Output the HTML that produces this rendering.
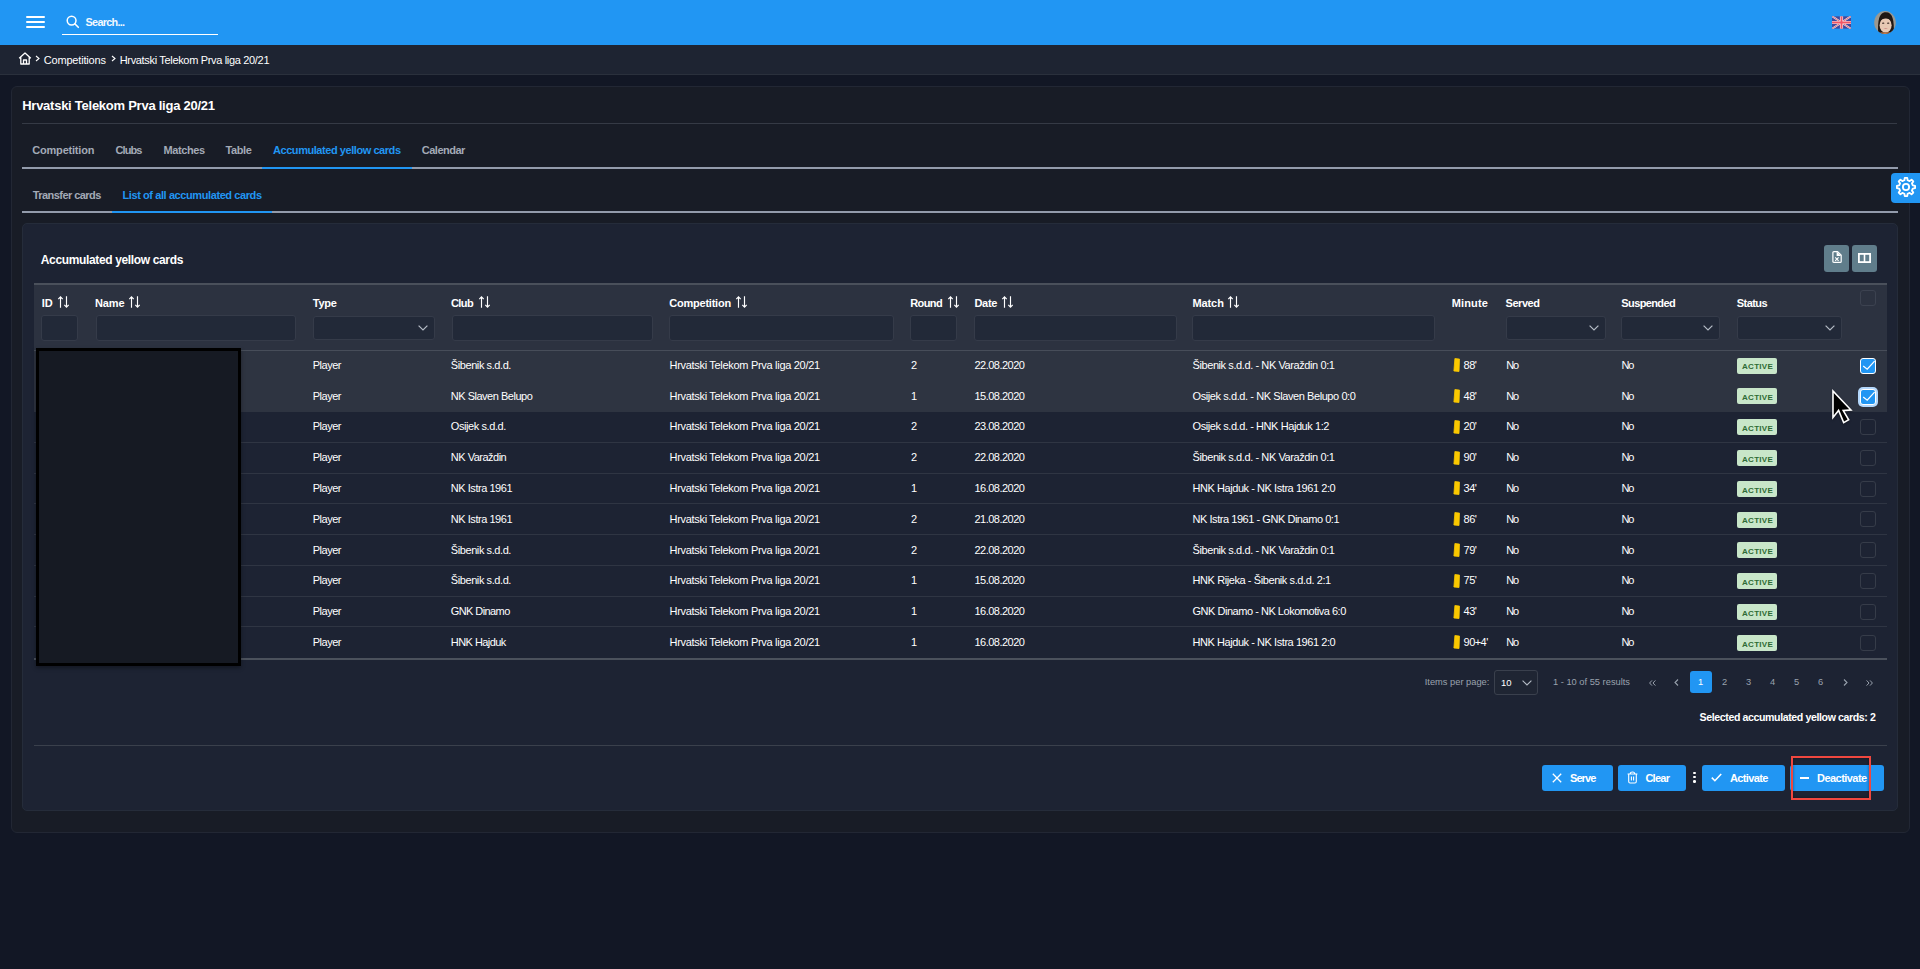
<!DOCTYPE html><html><head><meta charset="utf-8"><style>
*{margin:0;padding:0;box-sizing:border-box}
html,body{width:1920px;height:969px;overflow:hidden;background:#121725;font-family:"Liberation Sans", sans-serif;color:#fff}
.t{position:absolute;white-space:nowrap}
.r{position:absolute}
svg{position:absolute;overflow:visible}
</style></head><body><div class="r" style="left:0px;top:0px;width:1920px;height:45px;background:#2196f3"></div>
<div class="r" style="left:26px;top:16px;width:19px;height:2.2px;background:#fff;border-radius:1px"></div>
<div class="r" style="left:26px;top:21px;width:19px;height:2.2px;background:#fff;border-radius:1px"></div>
<div class="r" style="left:26px;top:26px;width:19px;height:2.2px;background:#fff;border-radius:1px"></div>
<svg style="left:66px;top:15px" width="14" height="14" viewBox="0 0 14 14"><circle cx="5.6" cy="5.6" r="4.4" fill="none" stroke="#fff" stroke-width="1.5"/><line x1="8.8" y1="8.8" x2="12.3" y2="12.3" stroke="#fff" stroke-width="1.6" stroke-linecap="round"/></svg>
<div class="t" style="left:85.60px;top:17.26px;font-size:10.8px;line-height:10.8px;font-weight:700;color:#f2f8fe;letter-spacing:-0.703px;">Search...</div>
<div class="r" style="left:62px;top:34px;width:156px;height:1.3px;background:#fff"></div>
<svg style="left:1832px;top:16px;overflow:hidden" width="19" height="13" viewBox="0 0 60 40">
<defs><clipPath id="fl"><rect width="60" height="40"/></clipPath></defs>
<g clip-path="url(#fl)">
<rect width="60" height="40" fill="#41479b"/>
<path d="M0,0 L60,40 M60,0 L0,40" stroke="#e8e8f0" stroke-width="6"/>
<path d="M0,0 L60,40 M60,0 L0,40" stroke="#ea5a66" stroke-width="2.6"/>
<path d="M30,0 V40 M0,20 H60" stroke="#f0f0f5" stroke-width="10"/>
<path d="M30,0 V40 M0,20 H60" stroke="#f05565" stroke-width="6"/>
</g></svg>
<svg style="left:1874px;top:11px;overflow:hidden" width="22" height="23" viewBox="0 0 22 23">
<defs><clipPath id="av"><ellipse cx="11" cy="11.5" rx="10.8" ry="11.4"/></clipPath></defs>
<g clip-path="url(#av)">
<rect width="22" height="23" fill="#9b9890"/>
<path d="M4.2,23 C3.6,11 4.5,1.2 11.8,1.2 C18.8,1.2 20.2,9 19.8,23 Z" fill="#1f1714"/>
<ellipse cx="11.6" cy="14.2" rx="6.0" ry="7.4" fill="#e8c9b4"/>
<path d="M5.4,10.5 C5.2,4.5 8.6,2.5 11.8,2.5 C15.2,2.5 18.2,4.6 18,10.8 C16.5,8.6 14.2,7.6 11.8,7.6 C9.2,7.6 6.8,8.6 5.4,10.5 Z" fill="#1f1714"/>
<ellipse cx="9.2" cy="12.2" rx="1.2" ry="0.65" fill="#3a2a25"/>
<ellipse cx="14.2" cy="12.2" rx="1.2" ry="0.65" fill="#3a2a25"/>
<path d="M9.2,16.8 Q11.7,19 14.2,16.8 Q11.7,18 9.2,16.8 Z" fill="#b8575a"/>
<rect x="6.5" y="21.4" width="10" height="2" fill="#c9804f"/>
</g></svg>
<div class="r" style="left:0px;top:45px;width:1920px;height:29px;background:#1e2432"></div>
<div class="r" style="left:0px;top:74px;width:1920px;height:1px;background:#2a303c"></div>
<svg style="left:18px;top:52px" width="14" height="13" viewBox="0 0 14 13"><path d="M1.2,6.2 L7,1 L12.8,6.2 M2.8,5 V12 H11.2 V5 M5.5,12 V8 H8.5 V12" fill="none" stroke="#fff" stroke-width="1.3" stroke-linejoin="round"/></svg>
<svg style="left:35px;top:55px" width="5" height="7" viewBox="0 0 5 7"><path d="M1,1 L4,3.5 L1,6" fill="none" stroke="#fff" stroke-width="1.1"/></svg>
<div class="t" style="left:43.70px;top:54.69px;font-size:11px;line-height:11px;letter-spacing:-0.172px;">Competitions</div>
<svg style="left:111px;top:55px" width="5" height="7" viewBox="0 0 5 7"><path d="M1,1 L4,3.5 L1,6" fill="none" stroke="#fff" stroke-width="1.1"/></svg>
<div class="t" style="left:119.70px;top:54.69px;font-size:11px;line-height:11px;letter-spacing:-0.328px;">Hrvatski Telekom Prva liga 20/21</div>
<div class="r" style="left:11px;top:86px;width:1899px;height:747px;background:#181c26;border:1px solid #222734;border-radius:6px"></div>
<div class="t" style="left:22.20px;top:99.00px;font-size:13px;line-height:13px;font-weight:700;letter-spacing:-0.253px;">Hrvatski Telekom Prva liga 20/21</div>
<div class="r" style="left:22px;top:123px;width:1875px;height:1px;background:#353a45"></div>
<div class="t" style="left:32.30px;top:145.19px;font-size:11px;line-height:11px;font-weight:700;color:#a3aab6;letter-spacing:-0.206px;">Competition</div>
<div class="t" style="left:115.50px;top:145.19px;font-size:11px;line-height:11px;font-weight:700;color:#a3aab6;letter-spacing:-0.914px;">Clubs</div>
<div class="t" style="left:163.50px;top:145.19px;font-size:11px;line-height:11px;font-weight:700;color:#a3aab6;letter-spacing:-0.419px;">Matches</div>
<div class="t" style="left:225.60px;top:145.19px;font-size:11px;line-height:11px;font-weight:700;color:#a3aab6;letter-spacing:-0.403px;">Table</div>
<div class="t" style="left:273.00px;top:145.19px;font-size:11px;line-height:11px;font-weight:700;color:#2196f3;letter-spacing:-0.442px;">Accumulated yellow cards</div>
<div class="t" style="left:421.80px;top:145.19px;font-size:11px;line-height:11px;font-weight:700;color:#a3aab6;letter-spacing:-0.51px;">Calendar</div>
<div class="r" style="left:22px;top:167px;width:1876px;height:2px;background:#939bab"></div>
<div class="r" style="left:262px;top:167px;width:150px;height:2px;background:#2196f3"></div>
<div class="t" style="left:32.70px;top:189.69px;font-size:11px;line-height:11px;font-weight:700;color:#a3aab6;letter-spacing:-0.548px;">Transfer cards</div>
<div class="t" style="left:122.50px;top:189.69px;font-size:11px;line-height:11px;font-weight:700;color:#2196f3;letter-spacing:-0.41px;">List of all accumulated cards</div>
<div class="r" style="left:22px;top:211px;width:1876px;height:2px;background:#939bab"></div>
<div class="r" style="left:112px;top:211px;width:160px;height:2px;background:#2196f3"></div>
<div class="r" style="left:1891px;top:173px;width:29px;height:30px;background:#2196f3;border-radius:4px 0 0 4px"></div>
<svg style="left:1895px;top:176.2px" width="22" height="22" viewBox="0 0 24 24"><path fill="none" stroke="#fff" stroke-width="2" stroke-linejoin="round" d="M19.39,10.23 L21.91,10.67 L21.91,13.33 L19.39,13.77 L18.48,15.97 L19.95,18.07 L18.07,19.95 L15.97,18.48 L13.77,19.39 L13.33,21.91 L10.67,21.91 L10.23,19.39 L8.03,18.48 L5.93,19.95 L4.05,18.07 L5.52,15.97 L4.61,13.77 L2.09,13.33 L2.09,10.67 L4.61,10.23 L5.52,8.03 L4.05,5.93 L5.93,4.05 L8.03,5.52 L10.23,4.61 L10.67,2.09 L13.33,2.09 L13.77,4.61 L15.97,5.52 L18.07,4.05 L19.95,5.93 L18.48,8.03 Z"/><circle cx="12" cy="12" r="3.4" fill="none" stroke="#fff" stroke-width="2"/></svg>
<div class="r" style="left:22px;top:223px;width:1876px;height:588px;background:#1d2333;border:1px solid #252c3a;border-radius:5px"></div>
<div class="t" style="left:40.80px;top:253.84px;font-size:12px;line-height:12px;font-weight:700;letter-spacing:-0.357px;">Accumulated yellow cards</div>
<div class="r" style="left:1824px;top:245px;width:25px;height:27px;background:#607d8b;border-radius:3px"></div>
<div class="r" style="left:1852px;top:245px;width:25px;height:27px;background:#607d8b;border-radius:3px"></div>
<svg style="left:1832px;top:251px" width="10" height="12" viewBox="0 0 10 12"><path d="M0.9,1.6 Q0.9,0.6 1.9,0.6 H5.6 L9.2,4.2 V10.4 Q9.2,11.4 8.2,11.4 H1.9 Q0.9,11.4 0.9,10.4 Z" fill="none" stroke="#fff" stroke-width="1.2" stroke-linejoin="round"/><path d="M4.6,0.6 V5 H9.2 Z" fill="#fff"/><path d="M3.2,6.3 L6.6,9.9 M6.6,6.3 L3.2,9.9" stroke="#fff" stroke-width="1.1"/></svg>
<svg style="left:1858px;top:253px" width="13" height="10" viewBox="0 0 13 10"><rect x="0.9" y="0.9" width="11.2" height="8.2" fill="none" stroke="#fff" stroke-width="1.8"/><line x1="6.5" y1="1" x2="6.5" y2="9" stroke="#fff" stroke-width="1.6"/></svg>
<div class="r" style="left:34px;top:283px;width:1853px;height:2px;background:#4a505b"></div>
<div class="r" style="left:34px;top:285px;width:1853px;height:65.5px;background:#2c3240"></div>
<div class="r" style="left:34px;top:350px;width:1853px;height:1px;background:#474d59"></div>
<div class="t" style="left:41.70px;top:297.69px;font-size:11px;line-height:11px;font-weight:700;">ID</div>
<svg style="left:58px;top:296px" width="12" height="12" viewBox="0 0 12 12"><path d="M2.5,11.8 V0.8 M0.3,3.2 L2.5,0.8 L4.7,3.2 M8.5,0.2 V11.2 M6.3,8.8 L8.5,11.2 L10.7,8.8" fill="none" stroke="#fff" stroke-width="1.15"/></svg>
<div class="t" style="left:95.10px;top:297.69px;font-size:11px;line-height:11px;font-weight:700;letter-spacing:-0.187px;">Name</div>
<svg style="left:129px;top:296px" width="12" height="12" viewBox="0 0 12 12"><path d="M2.5,11.8 V0.8 M0.3,3.2 L2.5,0.8 L4.7,3.2 M8.5,0.2 V11.2 M6.3,8.8 L8.5,11.2 L10.7,8.8" fill="none" stroke="#fff" stroke-width="1.15"/></svg>
<div class="t" style="left:312.80px;top:297.69px;font-size:11px;line-height:11px;font-weight:700;letter-spacing:-0.253px;">Type</div>
<div class="t" style="left:451.00px;top:297.69px;font-size:11px;line-height:11px;font-weight:700;letter-spacing:-0.613px;">Club</div>
<svg style="left:479px;top:296px" width="12" height="12" viewBox="0 0 12 12"><path d="M2.5,11.8 V0.8 M0.3,3.2 L2.5,0.8 L4.7,3.2 M8.5,0.2 V11.2 M6.3,8.8 L8.5,11.2 L10.7,8.8" fill="none" stroke="#fff" stroke-width="1.15"/></svg>
<div class="t" style="left:669.30px;top:297.69px;font-size:11px;line-height:11px;font-weight:700;letter-spacing:-0.236px;">Competition</div>
<svg style="left:736px;top:296px" width="12" height="12" viewBox="0 0 12 12"><path d="M2.5,11.8 V0.8 M0.3,3.2 L2.5,0.8 L4.7,3.2 M8.5,0.2 V11.2 M6.3,8.8 L8.5,11.2 L10.7,8.8" fill="none" stroke="#fff" stroke-width="1.15"/></svg>
<div class="t" style="left:910.30px;top:297.69px;font-size:11px;line-height:11px;font-weight:700;letter-spacing:-0.63px;">Round</div>
<svg style="left:948px;top:296px" width="12" height="12" viewBox="0 0 12 12"><path d="M2.5,11.8 V0.8 M0.3,3.2 L2.5,0.8 L4.7,3.2 M8.5,0.2 V11.2 M6.3,8.8 L8.5,11.2 L10.7,8.8" fill="none" stroke="#fff" stroke-width="1.15"/></svg>
<div class="t" style="left:974.40px;top:297.69px;font-size:11px;line-height:11px;font-weight:700;letter-spacing:-0.247px;">Date</div>
<svg style="left:1002px;top:296px" width="12" height="12" viewBox="0 0 12 12"><path d="M2.5,11.8 V0.8 M0.3,3.2 L2.5,0.8 L4.7,3.2 M8.5,0.2 V11.2 M6.3,8.8 L8.5,11.2 L10.7,8.8" fill="none" stroke="#fff" stroke-width="1.15"/></svg>
<div class="t" style="left:1192.40px;top:297.69px;font-size:11px;line-height:11px;font-weight:700;letter-spacing:-0.07px;">Match</div>
<svg style="left:1228px;top:296px" width="12" height="12" viewBox="0 0 12 12"><path d="M2.5,11.8 V0.8 M0.3,3.2 L2.5,0.8 L4.7,3.2 M8.5,0.2 V11.2 M6.3,8.8 L8.5,11.2 L10.7,8.8" fill="none" stroke="#fff" stroke-width="1.15"/></svg>
<div class="t" style="left:1451.80px;top:297.69px;font-size:11px;line-height:11px;font-weight:700;letter-spacing:0.112px;">Minute</div>
<div class="t" style="left:1505.50px;top:297.69px;font-size:11px;line-height:11px;font-weight:700;letter-spacing:-0.438px;">Served</div>
<div class="t" style="left:1621.30px;top:297.69px;font-size:11px;line-height:11px;font-weight:700;letter-spacing:-0.611px;">Suspended</div>
<div class="t" style="left:1736.80px;top:297.69px;font-size:11px;line-height:11px;font-weight:700;letter-spacing:-0.584px;">Status</div>
<div class="r" style="left:41.4px;top:315px;width:37.1px;height:26px;background:#222938;border:1px solid #353b49;border-radius:3px"></div>
<div class="r" style="left:95.6px;top:315px;width:200.79999999999998px;height:26px;background:#222938;border:1px solid #353b49;border-radius:3px"></div>
<div class="r" style="left:313.2px;top:315.5px;width:121.5px;height:24.0px;background:#222938;border:1px solid #353b49;border-radius:3px"></div>
<svg style="left:417.7px;top:324.8px" width="10" height="6" viewBox="0 0 10 6"><path d="M0.6,0.6 L5,5 L9.4,0.6" fill="none" stroke="#b5bcc6" stroke-width="1.2"/></svg>
<div class="r" style="left:451.5px;top:315px;width:201.10000000000002px;height:26px;background:#222938;border:1px solid #353b49;border-radius:3px"></div>
<div class="r" style="left:669.3px;top:315px;width:224.9000000000001px;height:26px;background:#222938;border:1px solid #353b49;border-radius:3px"></div>
<div class="r" style="left:910.3px;top:315px;width:47.200000000000045px;height:26px;background:#222938;border:1px solid #353b49;border-radius:3px"></div>
<div class="r" style="left:974.4px;top:315px;width:202.19999999999993px;height:26px;background:#222938;border:1px solid #353b49;border-radius:3px"></div>
<div class="r" style="left:1192.4px;top:315px;width:242.89999999999986px;height:26px;background:#222938;border:1px solid #353b49;border-radius:3px"></div>
<div class="r" style="left:1505.5px;top:315.5px;width:100.09999999999991px;height:24.0px;background:#222938;border:1px solid #353b49;border-radius:3px"></div>
<svg style="left:1588.6px;top:324.8px" width="10" height="6" viewBox="0 0 10 6"><path d="M0.6,0.6 L5,5 L9.4,0.6" fill="none" stroke="#b5bcc6" stroke-width="1.2"/></svg>
<div class="r" style="left:1621.3px;top:315.5px;width:99.0px;height:24.0px;background:#222938;border:1px solid #353b49;border-radius:3px"></div>
<svg style="left:1703.3px;top:324.8px" width="10" height="6" viewBox="0 0 10 6"><path d="M0.6,0.6 L5,5 L9.4,0.6" fill="none" stroke="#b5bcc6" stroke-width="1.2"/></svg>
<div class="r" style="left:1736.8px;top:315.5px;width:105.0px;height:24.0px;background:#222938;border:1px solid #353b49;border-radius:3px"></div>
<svg style="left:1824.8px;top:324.8px" width="10" height="6" viewBox="0 0 10 6"><path d="M0.6,0.6 L5,5 L9.4,0.6" fill="none" stroke="#b5bcc6" stroke-width="1.2"/></svg>
<div class="r" style="left:1860px;top:290px;width:16px;height:16px;border:1px solid #3c4250;border-radius:3px"></div>
<div class="r" style="left:34px;top:351px;width:1853px;height:61px;background:#2e3441"></div>
<div class="t" style="left:312.80px;top:359.89px;font-size:11px;line-height:11px;letter-spacing:-0.51px;">Player</div>
<div class="t" style="left:450.80px;top:359.89px;font-size:11px;line-height:11px;letter-spacing:-0.416px;">Šibenik s.d.d.</div>
<div class="t" style="left:669.50px;top:359.89px;font-size:11px;line-height:11px;letter-spacing:-0.303px;">Hrvatski Telekom Prva liga 20/21</div>
<div class="t" style="left:911.00px;top:359.89px;font-size:11px;line-height:11px;letter-spacing:-0.501px;">2</div>
<div class="t" style="left:974.40px;top:359.89px;font-size:11px;line-height:11px;letter-spacing:-0.5px;">22.08.2020</div>
<div class="t" style="left:1192.50px;top:359.89px;font-size:11px;line-height:11px;letter-spacing:-0.409px;">Šibenik s.d.d. - NK Varaždin 0:1</div>
<svg style="left:1453px;top:358.20px" width="8" height="14" viewBox="0 0 8 14"><path d="M1.9,0.5 L6.5,1.1 L6.0,13.5 L0.9,13.0 Z" fill="#fac800" stroke="#fac800" stroke-width="0.8" stroke-linejoin="round"/></svg>
<div class="t" style="left:1463.60px;top:359.89px;font-size:11px;line-height:11px;letter-spacing:-0.586px;">88'</div>
<div class="t" style="left:1506.30px;top:359.89px;font-size:11px;line-height:11px;letter-spacing:-1.15px;">No</div>
<div class="t" style="left:1621.50px;top:359.89px;font-size:11px;line-height:11px;letter-spacing:-1.15px;">No</div>
<div class="r" style="left:1737px;top:357.6px;width:40px;height:16px;background:#c8e6c9;border-radius:2px"></div>
<div class="t" style="left:1742.00px;top:363.43px;font-size:8.0px;line-height:8.0px;font-weight:700;color:#2e6b34;letter-spacing:0.3px;">ACTIVE</div>
<div class="r" style="left:1860px;top:358px;width:16px;height:16px;background:#2196f3;border:1px solid #fff;border-radius:3px"></div>
<svg style="left:1860px;top:358px" width="16" height="16" viewBox="0 0 16 16"><path d="M3.2,8 L7.2,11.2 L14.6,3.2" fill="none" stroke="#fff" stroke-width="1.25"/></svg>
<div class="t" style="left:312.80px;top:390.69px;font-size:11px;line-height:11px;letter-spacing:-0.51px;">Player</div>
<div class="t" style="left:450.80px;top:390.69px;font-size:11px;line-height:11px;letter-spacing:-0.487px;">NK Slaven Belupo</div>
<div class="t" style="left:669.50px;top:390.69px;font-size:11px;line-height:11px;letter-spacing:-0.303px;">Hrvatski Telekom Prva liga 20/21</div>
<div class="t" style="left:911.00px;top:390.69px;font-size:11px;line-height:11px;letter-spacing:-0.501px;">1</div>
<div class="t" style="left:974.40px;top:390.69px;font-size:11px;line-height:11px;letter-spacing:-0.5px;">15.08.2020</div>
<div class="t" style="left:1192.50px;top:390.69px;font-size:11px;line-height:11px;letter-spacing:-0.416px;">Osijek s.d.d. - NK Slaven Belupo 0:0</div>
<svg style="left:1453px;top:389.00px" width="8" height="14" viewBox="0 0 8 14"><path d="M1.9,0.5 L6.5,1.1 L6.0,13.5 L0.9,13.0 Z" fill="#fac800" stroke="#fac800" stroke-width="0.8" stroke-linejoin="round"/></svg>
<div class="t" style="left:1463.60px;top:390.69px;font-size:11px;line-height:11px;letter-spacing:-0.586px;">48'</div>
<div class="t" style="left:1506.30px;top:390.69px;font-size:11px;line-height:11px;letter-spacing:-1.15px;">No</div>
<div class="t" style="left:1621.50px;top:390.69px;font-size:11px;line-height:11px;letter-spacing:-1.15px;">No</div>
<div class="r" style="left:1737px;top:388.40000000000003px;width:40px;height:16px;background:#c8e6c9;border-radius:2px"></div>
<div class="t" style="left:1742.00px;top:394.23px;font-size:8.0px;line-height:8.0px;font-weight:700;color:#2e6b34;letter-spacing:0.3px;">ACTIVE</div>
<div class="r" style="left:1858px;top:387px;width:20px;height:20px;background:#b3d7fb;border-radius:5px"></div>
<div class="r" style="left:1860px;top:389px;width:16px;height:16px;background:#2196f3;border:1px solid #fff;border-radius:3px"></div>
<svg style="left:1860px;top:389px" width="16" height="16" viewBox="0 0 16 16"><path d="M3.2,8 L7.2,11.2 L14.6,3.2" fill="none" stroke="#fff" stroke-width="1.25"/></svg>
<div class="r" style="left:34px;top:442px;width:1853px;height:1px;background:#2f3543"></div>
<div class="t" style="left:312.80px;top:421.49px;font-size:11px;line-height:11px;letter-spacing:-0.51px;">Player</div>
<div class="t" style="left:450.80px;top:421.49px;font-size:11px;line-height:11px;letter-spacing:-0.413px;">Osijek s.d.d.</div>
<div class="t" style="left:669.50px;top:421.49px;font-size:11px;line-height:11px;letter-spacing:-0.303px;">Hrvatski Telekom Prva liga 20/21</div>
<div class="t" style="left:911.00px;top:421.49px;font-size:11px;line-height:11px;letter-spacing:-0.501px;">2</div>
<div class="t" style="left:974.40px;top:421.49px;font-size:11px;line-height:11px;letter-spacing:-0.5px;">23.08.2020</div>
<div class="t" style="left:1192.50px;top:421.49px;font-size:11px;line-height:11px;letter-spacing:-0.421px;">Osijek s.d.d. - HNK Hajduk 1:2</div>
<svg style="left:1453px;top:419.80px" width="8" height="14" viewBox="0 0 8 14"><path d="M1.9,0.5 L6.5,1.1 L6.0,13.5 L0.9,13.0 Z" fill="#fac800" stroke="#fac800" stroke-width="0.8" stroke-linejoin="round"/></svg>
<div class="t" style="left:1463.60px;top:421.49px;font-size:11px;line-height:11px;letter-spacing:-0.586px;">20'</div>
<div class="t" style="left:1506.30px;top:421.49px;font-size:11px;line-height:11px;letter-spacing:-1.15px;">No</div>
<div class="t" style="left:1621.50px;top:421.49px;font-size:11px;line-height:11px;letter-spacing:-1.15px;">No</div>
<div class="r" style="left:1737px;top:419.20000000000005px;width:40px;height:16px;background:#c8e6c9;border-radius:2px"></div>
<div class="t" style="left:1742.00px;top:425.03px;font-size:8.0px;line-height:8.0px;font-weight:700;color:#2e6b34;letter-spacing:0.3px;">ACTIVE</div>
<div class="r" style="left:1860px;top:419px;width:16px;height:16px;border:1px solid #363c49;border-radius:3px"></div>
<div class="r" style="left:34px;top:473px;width:1853px;height:1px;background:#2f3543"></div>
<div class="t" style="left:312.80px;top:452.29px;font-size:11px;line-height:11px;letter-spacing:-0.51px;">Player</div>
<div class="t" style="left:450.80px;top:452.29px;font-size:11px;line-height:11px;letter-spacing:-0.499px;">NK Varaždin</div>
<div class="t" style="left:669.50px;top:452.29px;font-size:11px;line-height:11px;letter-spacing:-0.303px;">Hrvatski Telekom Prva liga 20/21</div>
<div class="t" style="left:911.00px;top:452.29px;font-size:11px;line-height:11px;letter-spacing:-0.501px;">2</div>
<div class="t" style="left:974.40px;top:452.29px;font-size:11px;line-height:11px;letter-spacing:-0.5px;">22.08.2020</div>
<div class="t" style="left:1192.50px;top:452.29px;font-size:11px;line-height:11px;letter-spacing:-0.409px;">Šibenik s.d.d. - NK Varaždin 0:1</div>
<svg style="left:1453px;top:450.60px" width="8" height="14" viewBox="0 0 8 14"><path d="M1.9,0.5 L6.5,1.1 L6.0,13.5 L0.9,13.0 Z" fill="#fac800" stroke="#fac800" stroke-width="0.8" stroke-linejoin="round"/></svg>
<div class="t" style="left:1463.60px;top:452.29px;font-size:11px;line-height:11px;letter-spacing:-0.586px;">90'</div>
<div class="t" style="left:1506.30px;top:452.29px;font-size:11px;line-height:11px;letter-spacing:-1.15px;">No</div>
<div class="t" style="left:1621.50px;top:452.29px;font-size:11px;line-height:11px;letter-spacing:-1.15px;">No</div>
<div class="r" style="left:1737px;top:450.0px;width:40px;height:16px;background:#c8e6c9;border-radius:2px"></div>
<div class="t" style="left:1742.00px;top:455.83px;font-size:8.0px;line-height:8.0px;font-weight:700;color:#2e6b34;letter-spacing:0.3px;">ACTIVE</div>
<div class="r" style="left:1860px;top:450px;width:16px;height:16px;border:1px solid #363c49;border-radius:3px"></div>
<div class="r" style="left:34px;top:503px;width:1853px;height:1px;background:#2f3543"></div>
<div class="t" style="left:312.80px;top:483.09px;font-size:11px;line-height:11px;letter-spacing:-0.51px;">Player</div>
<div class="t" style="left:450.80px;top:483.09px;font-size:11px;line-height:11px;letter-spacing:-0.459px;">NK Istra 1961</div>
<div class="t" style="left:669.50px;top:483.09px;font-size:11px;line-height:11px;letter-spacing:-0.303px;">Hrvatski Telekom Prva liga 20/21</div>
<div class="t" style="left:911.00px;top:483.09px;font-size:11px;line-height:11px;letter-spacing:-0.501px;">1</div>
<div class="t" style="left:974.40px;top:483.09px;font-size:11px;line-height:11px;letter-spacing:-0.5px;">16.08.2020</div>
<div class="t" style="left:1192.50px;top:483.09px;font-size:11px;line-height:11px;letter-spacing:-0.44px;">HNK Hajduk - NK Istra 1961 2:0</div>
<svg style="left:1453px;top:481.40px" width="8" height="14" viewBox="0 0 8 14"><path d="M1.9,0.5 L6.5,1.1 L6.0,13.5 L0.9,13.0 Z" fill="#fac800" stroke="#fac800" stroke-width="0.8" stroke-linejoin="round"/></svg>
<div class="t" style="left:1463.60px;top:483.09px;font-size:11px;line-height:11px;letter-spacing:-0.586px;">34'</div>
<div class="t" style="left:1506.30px;top:483.09px;font-size:11px;line-height:11px;letter-spacing:-1.15px;">No</div>
<div class="t" style="left:1621.50px;top:483.09px;font-size:11px;line-height:11px;letter-spacing:-1.15px;">No</div>
<div class="r" style="left:1737px;top:480.8px;width:40px;height:16px;background:#c8e6c9;border-radius:2px"></div>
<div class="t" style="left:1742.00px;top:486.63px;font-size:8.0px;line-height:8.0px;font-weight:700;color:#2e6b34;letter-spacing:0.3px;">ACTIVE</div>
<div class="r" style="left:1860px;top:481px;width:16px;height:16px;border:1px solid #363c49;border-radius:3px"></div>
<div class="r" style="left:34px;top:534px;width:1853px;height:1px;background:#2f3543"></div>
<div class="t" style="left:312.80px;top:513.89px;font-size:11px;line-height:11px;letter-spacing:-0.51px;">Player</div>
<div class="t" style="left:450.80px;top:513.89px;font-size:11px;line-height:11px;letter-spacing:-0.459px;">NK Istra 1961</div>
<div class="t" style="left:669.50px;top:513.89px;font-size:11px;line-height:11px;letter-spacing:-0.303px;">Hrvatski Telekom Prva liga 20/21</div>
<div class="t" style="left:911.00px;top:513.89px;font-size:11px;line-height:11px;letter-spacing:-0.501px;">2</div>
<div class="t" style="left:974.40px;top:513.89px;font-size:11px;line-height:11px;letter-spacing:-0.5px;">21.08.2020</div>
<div class="t" style="left:1192.50px;top:513.89px;font-size:11px;line-height:11px;letter-spacing:-0.452px;">NK Istra 1961 - GNK Dinamo 0:1</div>
<svg style="left:1453px;top:512.20px" width="8" height="14" viewBox="0 0 8 14"><path d="M1.9,0.5 L6.5,1.1 L6.0,13.5 L0.9,13.0 Z" fill="#fac800" stroke="#fac800" stroke-width="0.8" stroke-linejoin="round"/></svg>
<div class="t" style="left:1463.60px;top:513.89px;font-size:11px;line-height:11px;letter-spacing:-0.586px;">86'</div>
<div class="t" style="left:1506.30px;top:513.89px;font-size:11px;line-height:11px;letter-spacing:-1.15px;">No</div>
<div class="t" style="left:1621.50px;top:513.89px;font-size:11px;line-height:11px;letter-spacing:-1.15px;">No</div>
<div class="r" style="left:1737px;top:511.6px;width:40px;height:16px;background:#c8e6c9;border-radius:2px"></div>
<div class="t" style="left:1742.00px;top:517.43px;font-size:8.0px;line-height:8.0px;font-weight:700;color:#2e6b34;letter-spacing:0.3px;">ACTIVE</div>
<div class="r" style="left:1860px;top:511px;width:16px;height:16px;border:1px solid #363c49;border-radius:3px"></div>
<div class="r" style="left:34px;top:565px;width:1853px;height:1px;background:#2f3543"></div>
<div class="t" style="left:312.80px;top:544.69px;font-size:11px;line-height:11px;letter-spacing:-0.51px;">Player</div>
<div class="t" style="left:450.80px;top:544.69px;font-size:11px;line-height:11px;letter-spacing:-0.416px;">Šibenik s.d.d.</div>
<div class="t" style="left:669.50px;top:544.69px;font-size:11px;line-height:11px;letter-spacing:-0.303px;">Hrvatski Telekom Prva liga 20/21</div>
<div class="t" style="left:911.00px;top:544.69px;font-size:11px;line-height:11px;letter-spacing:-0.501px;">2</div>
<div class="t" style="left:974.40px;top:544.69px;font-size:11px;line-height:11px;letter-spacing:-0.5px;">22.08.2020</div>
<div class="t" style="left:1192.50px;top:544.69px;font-size:11px;line-height:11px;letter-spacing:-0.409px;">Šibenik s.d.d. - NK Varaždin 0:1</div>
<svg style="left:1453px;top:543.00px" width="8" height="14" viewBox="0 0 8 14"><path d="M1.9,0.5 L6.5,1.1 L6.0,13.5 L0.9,13.0 Z" fill="#fac800" stroke="#fac800" stroke-width="0.8" stroke-linejoin="round"/></svg>
<div class="t" style="left:1463.60px;top:544.69px;font-size:11px;line-height:11px;letter-spacing:-0.586px;">79'</div>
<div class="t" style="left:1506.30px;top:544.69px;font-size:11px;line-height:11px;letter-spacing:-1.15px;">No</div>
<div class="t" style="left:1621.50px;top:544.69px;font-size:11px;line-height:11px;letter-spacing:-1.15px;">No</div>
<div class="r" style="left:1737px;top:542.4000000000001px;width:40px;height:16px;background:#c8e6c9;border-radius:2px"></div>
<div class="t" style="left:1742.00px;top:548.23px;font-size:8.0px;line-height:8.0px;font-weight:700;color:#2e6b34;letter-spacing:0.3px;">ACTIVE</div>
<div class="r" style="left:1860px;top:542px;width:16px;height:16px;border:1px solid #363c49;border-radius:3px"></div>
<div class="r" style="left:34px;top:596px;width:1853px;height:1px;background:#2f3543"></div>
<div class="t" style="left:312.80px;top:575.49px;font-size:11px;line-height:11px;letter-spacing:-0.51px;">Player</div>
<div class="t" style="left:450.80px;top:575.49px;font-size:11px;line-height:11px;letter-spacing:-0.416px;">Šibenik s.d.d.</div>
<div class="t" style="left:669.50px;top:575.49px;font-size:11px;line-height:11px;letter-spacing:-0.303px;">Hrvatski Telekom Prva liga 20/21</div>
<div class="t" style="left:911.00px;top:575.49px;font-size:11px;line-height:11px;letter-spacing:-0.501px;">1</div>
<div class="t" style="left:974.40px;top:575.49px;font-size:11px;line-height:11px;letter-spacing:-0.5px;">15.08.2020</div>
<div class="t" style="left:1192.50px;top:575.49px;font-size:11px;line-height:11px;letter-spacing:-0.412px;">HNK Rijeka - Šibenik s.d.d. 2:1</div>
<svg style="left:1453px;top:573.80px" width="8" height="14" viewBox="0 0 8 14"><path d="M1.9,0.5 L6.5,1.1 L6.0,13.5 L0.9,13.0 Z" fill="#fac800" stroke="#fac800" stroke-width="0.8" stroke-linejoin="round"/></svg>
<div class="t" style="left:1463.60px;top:575.49px;font-size:11px;line-height:11px;letter-spacing:-0.586px;">75'</div>
<div class="t" style="left:1506.30px;top:575.49px;font-size:11px;line-height:11px;letter-spacing:-1.15px;">No</div>
<div class="t" style="left:1621.50px;top:575.49px;font-size:11px;line-height:11px;letter-spacing:-1.15px;">No</div>
<div class="r" style="left:1737px;top:573.2px;width:40px;height:16px;background:#c8e6c9;border-radius:2px"></div>
<div class="t" style="left:1742.00px;top:579.03px;font-size:8.0px;line-height:8.0px;font-weight:700;color:#2e6b34;letter-spacing:0.3px;">ACTIVE</div>
<div class="r" style="left:1860px;top:573px;width:16px;height:16px;border:1px solid #363c49;border-radius:3px"></div>
<div class="r" style="left:34px;top:626px;width:1853px;height:1px;background:#2f3543"></div>
<div class="t" style="left:312.80px;top:606.29px;font-size:11px;line-height:11px;letter-spacing:-0.51px;">Player</div>
<div class="t" style="left:450.80px;top:606.29px;font-size:11px;line-height:11px;letter-spacing:-0.589px;">GNK Dinamo</div>
<div class="t" style="left:669.50px;top:606.29px;font-size:11px;line-height:11px;letter-spacing:-0.303px;">Hrvatski Telekom Prva liga 20/21</div>
<div class="t" style="left:911.00px;top:606.29px;font-size:11px;line-height:11px;letter-spacing:-0.501px;">1</div>
<div class="t" style="left:974.40px;top:606.29px;font-size:11px;line-height:11px;letter-spacing:-0.5px;">16.08.2020</div>
<div class="t" style="left:1192.50px;top:606.29px;font-size:11px;line-height:11px;letter-spacing:-0.473px;">GNK Dinamo - NK Lokomotiva 6:0</div>
<svg style="left:1453px;top:604.60px" width="8" height="14" viewBox="0 0 8 14"><path d="M1.9,0.5 L6.5,1.1 L6.0,13.5 L0.9,13.0 Z" fill="#fac800" stroke="#fac800" stroke-width="0.8" stroke-linejoin="round"/></svg>
<div class="t" style="left:1463.60px;top:606.29px;font-size:11px;line-height:11px;letter-spacing:-0.586px;">43'</div>
<div class="t" style="left:1506.30px;top:606.29px;font-size:11px;line-height:11px;letter-spacing:-1.15px;">No</div>
<div class="t" style="left:1621.50px;top:606.29px;font-size:11px;line-height:11px;letter-spacing:-1.15px;">No</div>
<div class="r" style="left:1737px;top:604.0px;width:40px;height:16px;background:#c8e6c9;border-radius:2px"></div>
<div class="t" style="left:1742.00px;top:609.83px;font-size:8.0px;line-height:8.0px;font-weight:700;color:#2e6b34;letter-spacing:0.3px;">ACTIVE</div>
<div class="r" style="left:1860px;top:604px;width:16px;height:16px;border:1px solid #363c49;border-radius:3px"></div>
<div class="t" style="left:312.80px;top:637.09px;font-size:11px;line-height:11px;letter-spacing:-0.51px;">Player</div>
<div class="t" style="left:450.80px;top:637.09px;font-size:11px;line-height:11px;letter-spacing:-0.55px;">HNK Hajduk</div>
<div class="t" style="left:669.50px;top:637.09px;font-size:11px;line-height:11px;letter-spacing:-0.303px;">Hrvatski Telekom Prva liga 20/21</div>
<div class="t" style="left:911.00px;top:637.09px;font-size:11px;line-height:11px;letter-spacing:-0.501px;">1</div>
<div class="t" style="left:974.40px;top:637.09px;font-size:11px;line-height:11px;letter-spacing:-0.5px;">16.08.2020</div>
<div class="t" style="left:1192.50px;top:637.09px;font-size:11px;line-height:11px;letter-spacing:-0.44px;">HNK Hajduk - NK Istra 1961 2:0</div>
<svg style="left:1453px;top:635.40px" width="8" height="14" viewBox="0 0 8 14"><path d="M1.9,0.5 L6.5,1.1 L6.0,13.5 L0.9,13.0 Z" fill="#fac800" stroke="#fac800" stroke-width="0.8" stroke-linejoin="round"/></svg>
<div class="t" style="left:1463.60px;top:637.09px;font-size:11px;line-height:11px;letter-spacing:-0.55px;">90+4'</div>
<div class="t" style="left:1506.30px;top:637.09px;font-size:11px;line-height:11px;letter-spacing:-1.15px;">No</div>
<div class="t" style="left:1621.50px;top:637.09px;font-size:11px;line-height:11px;letter-spacing:-1.15px;">No</div>
<div class="r" style="left:1737px;top:634.8px;width:40px;height:16px;background:#c8e6c9;border-radius:2px"></div>
<div class="t" style="left:1742.00px;top:640.63px;font-size:8.0px;line-height:8.0px;font-weight:700;color:#2e6b34;letter-spacing:0.3px;">ACTIVE</div>
<div class="r" style="left:1860px;top:635px;width:16px;height:16px;border:1px solid #363c49;border-radius:3px"></div>
<div class="r" style="left:34px;top:658px;width:1853px;height:1.5px;background:#4b515c"></div>
<div class="r" style="left:36px;top:348px;width:205px;height:318px;background:#161a23;border:3px solid #000;box-shadow:0 2px 4px rgba(0,0,0,0.35)"></div>
<div class="t" style="left:1424.75px;top:677.73px;font-size:9.3px;line-height:9.3px;color:#9aa2ae;">Items per page:</div>
<div class="r" style="left:1494px;top:670.25px;width:44px;height:24.5px;border:1px solid #3a404d;border-radius:3px;background:#1f2533"></div>
<div class="t" style="left:1501.00px;top:677.56px;font-size:9.5px;line-height:9.5px;">10</div>
<svg style="left:1522px;top:680px" width="10" height="6" viewBox="0 0 10 6"><path d="M0.6,0.6 L5,5 L9.4,0.6" fill="none" stroke="#b5bcc6" stroke-width="1.1"/></svg>
<div class="t" style="left:1553.00px;top:677.73px;font-size:9.3px;line-height:9.3px;color:#9aa2ae;">1 - 10 of 55 results</div>
<svg style="left:1648.5px;top:679.5px" width="7" height="6" viewBox="0 0 7 6"><path d="M3,0.4 L0.6,3 L3,5.6 M6.4,0.4 L4,3 L6.4,5.6" fill="none" stroke="#98a0ac" stroke-width="1"/></svg>
<svg style="left:1673.5px;top:679.3px" width="5" height="7" viewBox="0 0 5 7"><path d="M4,0.5 L1,3.5 L4,6.5" fill="none" stroke="#98a0ac" stroke-width="1.1"/></svg>
<div class="r" style="left:1690px;top:671px;width:22px;height:22px;background:#2196f3;border-radius:3px"></div>
<div class="t" style="left:1698.00px;top:677.93px;font-size:9.3px;line-height:9.3px;">1</div>
<div class="t" style="left:1722.00px;top:677.93px;font-size:9.3px;line-height:9.3px;color:#9aa2ae;">2</div>
<div class="t" style="left:1746.10px;top:677.93px;font-size:9.3px;line-height:9.3px;color:#9aa2ae;">3</div>
<div class="t" style="left:1769.90px;top:677.93px;font-size:9.3px;line-height:9.3px;color:#9aa2ae;">4</div>
<div class="t" style="left:1794.00px;top:677.93px;font-size:9.3px;line-height:9.3px;color:#9aa2ae;">5</div>
<div class="t" style="left:1818.00px;top:677.93px;font-size:9.3px;line-height:9.3px;color:#9aa2ae;">6</div>
<svg style="left:1842.5px;top:679.3px" width="5" height="7" viewBox="0 0 5 7"><path d="M1,0.5 L4,3.5 L1,6.5" fill="none" stroke="#98a0ac" stroke-width="1.1"/></svg>
<svg style="left:1865.5px;top:679.5px" width="7" height="6" viewBox="0 0 7 6"><path d="M0.6,0.4 L3,3 L0.6,5.6 M4,0.4 L6.4,3 L4,5.6" fill="none" stroke="#98a0ac" stroke-width="1"/></svg>
<div class="t" style="left:1699.60px;top:712.03px;font-size:10.6px;line-height:10.6px;font-weight:700;letter-spacing:-0.397px;">Selected accumulated yellow cards: 2</div>
<div class="r" style="left:34px;top:745px;width:1853px;height:1px;background:#3a404c"></div>
<div class="r" style="left:1541.7px;top:765px;width:71.20000000000005px;height:26px;background:#2196f3;border-radius:3px"></div>
<div class="t" style="left:1570.00px;top:773.09px;font-size:11px;line-height:11px;font-weight:700;letter-spacing:-0.918px;">Serve</div>
<svg style="left:1552px;top:773px" width="10" height="10" viewBox="0 0 10 10"><path d="M0.8,0.8 L9.2,9.2 M9.2,0.8 L0.8,9.2" stroke="#fff" stroke-width="1.3"/></svg>
<div class="r" style="left:1618px;top:765px;width:67.70000000000005px;height:26px;background:#2196f3;border-radius:3px"></div>
<div class="t" style="left:1645.40px;top:773.09px;font-size:11px;line-height:11px;font-weight:700;letter-spacing:-0.729px;">Clear</div>
<svg style="left:1627px;top:771px" width="11" height="13" viewBox="0 0 11 13"><path d="M0.6,3 H10.4 M3.2,3 C3.2,0.4 7.8,0.4 7.8,3 M1.7,3 V10.6 Q1.7,12 3.1,12 H7.9 Q9.3,12 9.3,10.6 V3 M4.4,5.4 V9.6 M6.6,5.4 V9.6" fill="none" stroke="#fff" stroke-width="1.1"/></svg>
<div class="r" style="left:1693.2px;top:771.55px;width:2.5px;height:2.5px;background:#fff;border-radius:50%"></div>
<div class="r" style="left:1693.2px;top:775.85px;width:2.5px;height:2.5px;background:#fff;border-radius:50%"></div>
<div class="r" style="left:1693.2px;top:780.15px;width:2.5px;height:2.5px;background:#fff;border-radius:50%"></div>
<div class="r" style="left:1702px;top:765px;width:82.59999999999991px;height:26px;background:#2196f3;border-radius:3px"></div>
<div class="t" style="left:1730.00px;top:773.09px;font-size:11px;line-height:11px;font-weight:700;letter-spacing:-0.628px;">Activate</div>
<svg style="left:1711px;top:773px" width="11" height="9" viewBox="0 0 11 9"><path d="M0.8,4.6 L3.9,7.7 L10.2,1" fill="none" stroke="#fff" stroke-width="1.6"/></svg>
<div class="r" style="left:1790px;top:765px;width:94px;height:26px;background:#2196f3;border-radius:3px"></div>
<div class="t" style="left:1817.00px;top:773.09px;font-size:11px;line-height:11px;font-weight:700;letter-spacing:-0.537px;">Deactivate</div>
<div class="r" style="left:1799.5px;top:777px;width:9.5px;height:1.6px;background:#fff"></div>
<div class="r" style="left:1790.8px;top:756px;width:80.5px;height:44px;border:2px solid #f0473f;box-shadow:inset 0 0 3px rgba(0,0,0,0.45)"></div>
<svg style="left:1830px;top:386px;filter:drop-shadow(0.5px 1px 1px rgba(0,0,0,0.35))" width="26" height="40" viewBox="0 0 26 40"><path d="M2.18,2.93 L2.18,33.87 L8.37,25.95 L13.32,37.83 L19.75,34.12 L14.55,25.2 L22.72,24.71 Z" fill="#fff"/><path d="M3.78,6.96 L3.78,29.22 L8.79,22.81 L14.10,35.53 L17.56,33.54 L11.86,23.76 L19.21,23.32 Z" fill="#000"/></svg></body></html>
